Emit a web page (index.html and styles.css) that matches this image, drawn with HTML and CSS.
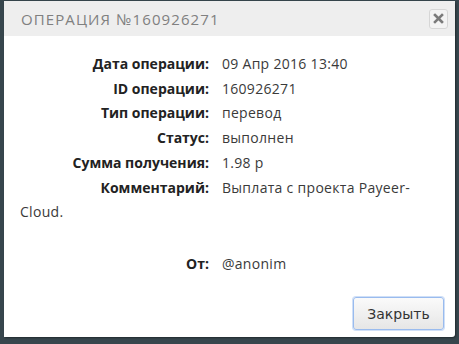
FILE: index.html
```html
<!DOCTYPE html>
<html lang="ru">
<head>
    <meta charset="UTF-8">
    <title>Операция №160926271</title>
    <link rel="stylesheet" href="styles.css">
</head>
<body>
    <div class="dialog">
        <!-- Заголовок окна -->
        <div class="dialog-head">
            <span class="dialog-title">Операция №160926271</span>
            <button class="dialog-close" title="Закрыть">
                <svg width="11" height="11" viewBox="0 0 11 11">
                    <path d="M2 2 L9 9 M9 2 L2 9" stroke="#7a7a7a" stroke-width="2.6" stroke-linecap="square"/>
                </svg>
            </button>
        </div>

        <!-- Данные операции -->
        <div class="dialog-body">
            <div class="row"><span class="label">Дата операции:</span> 09 Апр 2016 13:40</div>
            <div class="row"><span class="label">ID операции:</span> 160926271</div>
            <div class="row"><span class="label">Тип операции:</span> перевод</div>
            <div class="row"><span class="label">Статус:</span> выполнен</div>
            <div class="row"><span class="label">Сумма получения:</span> 1.98 р</div>
            <div class="row"><span class="label">Комментарий:</span> Выплата с проекта Payeer-Cloud.</div>
            <div class="row from"><span class="label">От:</span> @anonim</div>
        </div>

        <div class="dialog-foot">
            <button class="btn">Закрыть</button>
        </div>
    </div>
</body>
</html>
```

FILE: styles.css
```css
:root {
    --bg-color: #37464d;
    --head-bg: #eeeeee;
    --text-color: #222222;
    --title-color: #808080;
}
body {
    margin: 0;
    padding: 0;
    background-color: var(--bg-color);
    font-family: "Open Sans", sans-serif;
    color: var(--text-color);
    height: 344px;
    overflow: hidden;
}
.dialog {
    margin: 1px 0 0 4px;
    width: 451px;
    height: 336px;
    background: #ffffff;
    border-radius: 0 3px 3px 0;
    box-shadow: 1px 1px 2px rgba(0, 0, 0, 0.4);
    display: flex;
    flex-direction: column;
}
.dialog-head {
    height: 35px;
    background: var(--head-bg);
    display: flex;
    align-items: center;
    justify-content: space-between;
    padding: 0 7px 0 17px;
}
.dialog-title {
    font-size: 15px;
    letter-spacing: 1.1px;
    text-transform: uppercase;
    color: var(--title-color);
}
.dialog-close {
    width: 19px;
    height: 20px;
    padding: 0;
    border: 1px solid #d6d6d6;
    border-radius: 3px;
    background: #f3f3f3;
    display: flex;
    align-items: center;
    justify-content: center;
}
.dialog-body {
    flex: 1;
    padding: 16px 20px 0 16px;
    font-size: 14px;
    line-height: 24.7px;
}
.row {
    color: #3a3a3a;
    letter-spacing: 0.3px;
}
.label {
    display: inline-block;
    width: 189px;
    margin-right: 9px;
    text-align: right;
    white-space: nowrap;
    font-weight: bold;
    letter-spacing: 0;
    color: #222222;
}
.from {
    margin-top: 27px;
}
.dialog-foot {
    display: flex;
    justify-content: flex-end;
    padding: 0 11px 7px 0;
}
.btn {
    width: 91px;
    height: 33px;
    font-family: "DejaVu Sans", sans-serif;
    font-size: 14px;
    color: #333333;
    border: 1px solid #99bbee;
    border-radius: 3px;
    background: linear-gradient(#fafafa, #e6e6e6);
    box-shadow: 0 0 0 1px #cfdff7;
}
```
